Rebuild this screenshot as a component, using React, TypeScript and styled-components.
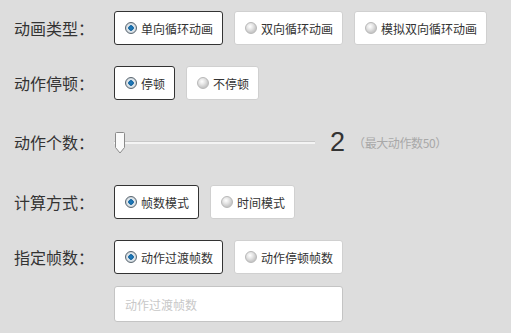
import React from "react";
import styled, { createGlobalStyle } from "styled-components";

const GlobalStyle = createGlobalStyle`
  html, body {
    margin: 0;
    padding: 0;
    background: #dddddd;
  }
  body {
    font-family: "Noto Sans CJK SC", "Liberation Sans", sans-serif;
  }
`;

const Form = styled.div`
  display: flex;
  flex-direction: column;
  gap: 21px;
  padding: 11px 0 0 14px;
`;

const Row = styled.div<{ $h?: number }>`
  display: flex;
  align-items: flex-start;
  min-height: ${(p) => p.$h || 34}px;
`;

const Label = styled.div<{ $h?: number }>`
  width: 100px;
  flex: none;
  height: ${(p) => p.$h || 34}px;
  line-height: ${(p) => p.$h || 34}px;
  font-size: 16px;
  color: #333;
`;

const Field = styled.div`
  display: flex;
  flex-direction: column;
  gap: 12px;
`;

const Options = styled.div`
  display: flex;
  gap: 11px;
`;

const Choice = styled.div<{ $on?: boolean }>`
  box-sizing: border-box;
  height: 34px;
  display: flex;
  align-items: center;
  gap: 4px;
  padding: 0 9px 0 10px;
  background: #fff;
  border: 1px solid ${(p) => (p.$on ? "#333" : "#d0d0d0")};
  border-radius: 3px;
  font-size: 12px;
  color: #333;
  white-space: nowrap;
`;

const Radio = styled.span<{ $on?: boolean }>`
  box-sizing: border-box;
  width: 12px;
  height: 12px;
  border-radius: 50%;
  border: 1px solid ${(p) => (p.$on ? "#5a6670" : "#b8b8b8")};
  background: ${(p) =>
    p.$on
      ? "radial-gradient(circle at 50% 50%, #1f7fc2 0, #1766a0 2.5px, #e8eef2 3px, #c9d2d8 5px)"
      : "radial-gradient(circle at 40% 35%, #ffffff 0, #e6e6e6 3px, #c8c8c8 6px)"};
  flex: none;
`;

const SliderRow = styled.div`
  display: flex;
  align-items: center;
  height: 43px;
`;

const Track = styled.div`
  position: relative;
  width: 201px;
  height: 21px;
  display: flex;
  align-items: center;
`;

const Line = styled.div`
  flex: 1;
  height: 2px;
  background: #f4f4f4;
  border-top: 1px solid #c8c8c8;
`;

const Thumb = styled.svg`
  position: absolute;
  left: 1px;
  top: 0;
`;

const Count = styled.span`
  font-family: "Liberation Sans", Arial, sans-serif;
  font-size: 27px;
  color: #333;
  margin-left: 15px;
`;

const Hint = styled.span`
  font-size: 12px;
  color: #a8a8a8;
  margin-left: 8px;
  letter-spacing: -0.4px;
`;

const TextBox = styled.input`
  box-sizing: border-box;
  width: 229px;
  height: 36px;
  padding: 0 10px;
  border: 1px solid #c4c4c4;
  border-radius: 3px;
  background: #fff;
  font-family: "Noto Sans CJK SC", sans-serif;
  font-size: 12px;
  outline: none;
  &::placeholder {
    color: #c8c8c8;
  }
`;

function Opt({ on, text }: { on?: boolean; text: string }) {
  return (
    <Choice $on={on}>
      <Radio $on={on} />
      {text}
    </Choice>
  );
}

export default function App() {
  return (
    <>
      <GlobalStyle />
      <Form>
        <Row>
          <Label>动画类型：</Label>
          <Options>
            <Opt on text="单向循环动画" />
            <Opt text="双向循环动画" />
            <Opt text="模拟双向循环动画" />
          </Options>
        </Row>
        <Row>
          <Label>动作停顿：</Label>
          <Options>
            <Opt on text="停顿" />
            <Opt text="不停顿" />
          </Options>
        </Row>
        <SliderRow>
          <Label $h={43}>动作个数：</Label>
          <Track>
            <Line />
            <Thumb width="10" height="22" viewBox="0 0 10 22">
              <path
                d="M1.5 0.5 H8.5 A1 1 0 0 1 9.5 1.5 V15.5 L5 21 L0.5 15.5 V1.5 A1 1 0 0 1 1.5 0.5 Z"
                fill="#fafafa"
                stroke="#8a8a8a"
                strokeWidth="1"
              />
            </Thumb>
          </Track>
          <Count>2</Count>
          <Hint>（最大动作数50）</Hint>
        </SliderRow>
        <Row>
          <Label>计算方式：</Label>
          <Options>
            <Opt on text="帧数模式" />
            <Opt text="时间模式" />
          </Options>
        </Row>
        <Row>
          <Label>指定帧数：</Label>
          <Field>
            <Options>
              <Opt on text="动作过渡帧数" />
              <Opt text="动作停顿帧数" />
            </Options>
            <TextBox placeholder="动作过渡帧数" />
          </Field>
        </Row>
      </Form>
    </>
  );
}
